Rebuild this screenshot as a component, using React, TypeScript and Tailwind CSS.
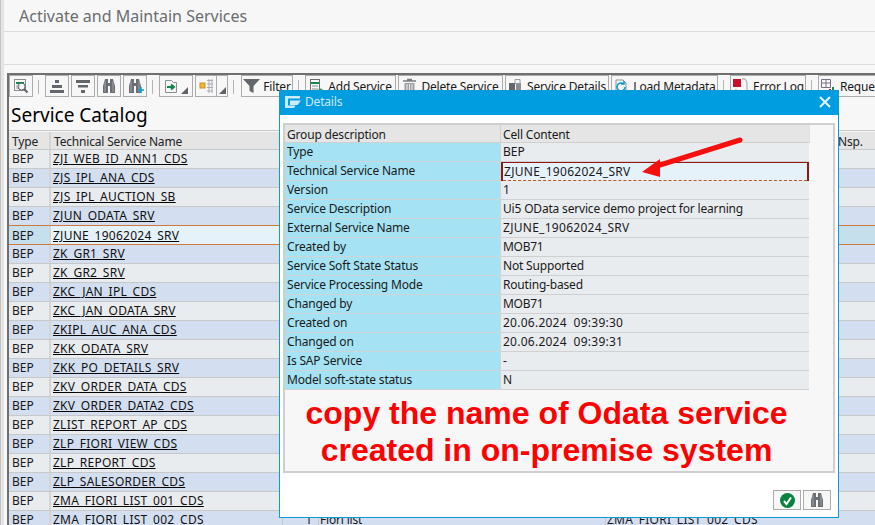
import React from "react";

const names = [
  "ZJI_WEB_ID_ANN1_CDS","ZJS_IPL_ANA_CDS","ZJS_IPL_AUCTION_SB","ZJUN_ODATA_SRV","ZJUNE_19062024_SRV",
  "ZK_GR1_SRV","ZK_GR2_SRV","ZKC_JAN_IPL_CDS","ZKC_JAN_ODATA_SRV","ZKIPL_AUC_ANA_CDS","ZKK_ODATA_SRV",
  "ZKK_PO_DETAILS_SRV","ZKV_ORDER_DATA_CDS","ZKV_ORDER_DATA2_CDS","ZLIST_REPORT_AP_CDS","ZLP_FIORI_VIEW_CDS",
  "ZLP_REPORT_CDS","ZLP_SALESORDER_CDS","ZMA_FIORI_LIST_001_CDS","ZMA_FIORI_LIST_002_CDS",
];

const details: [string, string, string][] = [
  ["Type","BEP","tracking-normal"],
  ["Technical Service Name","ZJUNE_19062024_SRV","tracking-[0.28px]"],
  ["Version","1","tracking-normal"],
  ["Service Description","Ui5 OData service demo project for learning","tracking-[-0.18px]"],
  ["External Service Name","ZJUNE_19062024_SRV","tracking-[0.28px]"],
  ["Created by","MOB71","tracking-[-0.3px]"],
  ["Service Soft State Status","Not Supported","tracking-[-0.18px]"],
  ["Service Processing Mode","Routing-based","tracking-[-0.18px]"],
  ["Changed by","MOB71","tracking-[-0.3px]"],
  ["Created on","20.06.2024  09:39:30","tracking-[0.25px]"],
  ["Changed on","20.06.2024  09:39:31","tracking-[0.25px]"],
  ["Is SAP Service","-","tracking-normal"],
  ["Model soft-state status","N","tracking-normal"],
];

function Binoculars({ plus }: { plus?: boolean }) {
  return (
    <svg width="18" height="16" viewBox="0 0 18 16">
      <path d="M5 1h3v4h2V1h3l2 7v7h-5V8H8v7H3V8z" fill="#6b6f75" />
      <path d="M5 3v11M13 3v11" stroke="#9fa3a8" strokeWidth="1" />
      {plus && <path d="M12 12h6M15 9v6" stroke="#0a9bd8" strokeWidth="1.6" />}
    </svg>
  );
}

function TBtn({ w, children, className = "" }: { w: string; children?: React.ReactNode; className?: string }) {
  return (
    <div className={`${w} h-[22px] shrink-0 border border-[#ababab] bg-[#f7f7f7] flex items-center justify-center gap-1 overflow-hidden whitespace-nowrap [&>span]:pt-[2px] ${className}`}>
      {children}
    </div>
  );
}

const Sep = () => <div className="w-px h-[14px] mt-[5px] bg-[#b5b5b5] ml-[5px] mr-[6px] shrink-0" />;
const Corner = () => (
  <svg width="7" height="7" viewBox="0 0 7 7" className="self-end mb-[2px]">
    <path d="M7 0v7H0z" fill="#5f6368" />
  </svg>
);

export default function App() {
  return (
    <div className="relative w-[875px] h-[525px] overflow-hidden bg-[#f7f7f7] text-[12px] leading-[18px] tracking-[-0.18px] text-[#1a1a1a] font-['Noto_Sans',sans-serif]">
      <div className="flex h-full">
        <div className="w-[4px] shrink-0 bg-[#e4e4e4] border-l border-[#c4c4c4]" />
        <div className="flex-1 flex flex-col min-w-0">
          <div className="h-[32px] shrink-0 border-b border-[#dcdcdc] pl-[15px] pt-[4px] text-[16px] leading-[24px] tracking-normal text-[#6a6d70]">
            Activate and Maintain Services
          </div>
          <div className="h-[33px] shrink-0 border-b border-[#dcdcdc]" />
          <div className="h-[8px] shrink-0" />
          <div className="flex-1 ml-[3px] border-l-2 border-t-2 border-[#6f6f6f] flex flex-col min-h-0">
            {/* toolbar */}
            <div className="h-[23px] shrink-0 flex items-start">
              <TBtn w="w-[24px]">
                <svg width="16" height="16" viewBox="0 0 16 16" fill="none">
                  <rect x="1.5" y="1.5" width="11" height="11" stroke="#8a8d91" />
                  <path d="M3 5h8" stroke="#0f8a4c" strokeWidth="2" />
                  <path d="M3 8h5M3 10h4" stroke="#9c9fa3" />
                  <circle cx="8.5" cy="8.5" r="3.5" stroke="#5f6368" fill="#ffffff66" />
                  <path d="M11 11l3.5 3.5" stroke="#5f6368" strokeWidth="2" />
                </svg>
              </TBtn>
              <Sep />
              <TBtn w="w-[24px]">
                <svg width="16" height="14" viewBox="0 0 16 14">
                  <path d="M6 1h4v3H6zM3 6h10v3H3zM1 11h14v3H1z" fill="#63666a" />
                </svg>
              </TBtn>
              <TBtn w="w-[24px]" className="ml-[2px]">
                <svg width="16" height="14" viewBox="0 0 16 14">
                  <path d="M1 1h14v3H1zM3 6h10v2.5H3zM6 11h4v3H6z" fill="#63666a" />
                </svg>
              </TBtn>
              <TBtn w="w-[24px]" className="ml-[2px]"><Binoculars /></TBtn>
              <TBtn w="w-[24px]" className="ml-[2px]"><Binoculars plus /></TBtn>
              <Sep />
              <TBtn w="w-[34px]" className="!gap-[2px]">
                <svg width="15" height="16" viewBox="0 0 15 16" fill="none">
                  <path d="M1.5 2.5h6l2 2h3v10h-11z" stroke="#8a8d91" fill="#f7f7f7" />
                  <path d="M3 9h6M7 6.5 10 9l-3 2.5" stroke="#0f8a4c" strokeWidth="2" />
                </svg>
                <Corner />
              </TBtn>
              <TBtn w="w-[21px]" className="ml-[2px] !border-r-0">
                <svg width="15" height="14" viewBox="0 0 15 14" fill="none">
                  <rect x="1" y="4" width="5" height="5" fill="#f1b544" stroke="#d58a12" />
                  <path d="M8 1.5h6M8 5h6M8 8.5h6M8 12h6M10 0v14M13 0v14" stroke="#a8abaf" />
                </svg>
              </TBtn>
              <TBtn w="w-[12px]"><Corner /></TBtn>
              <Sep />
              <TBtn w="w-[52px]" className="ml-px !gap-[3px]">
                <svg width="17" height="16" viewBox="0 0 17 16">
                  <path d="M0 1h17l-6.5 7v7l-4-2V8z" fill="#63666a" />
                </svg>
                <span>Filter</span>
              </TBtn>
              <Sep />
              <TBtn w="w-[91px]">
                <svg width="15" height="16" viewBox="0 0 15 16" fill="none">
                  <rect x="1.5" y="1.5" width="9" height="12" stroke="#6b6f75" />
                  <path d="M2 5h8" stroke="#0f8a4c" strokeWidth="2" />
                  <path d="M3 8h6M3 11h6" stroke="#8a8d91" />
                  <circle cx="11.5" cy="13" r="2.5" fill="#2f9e5f" />
                </svg>
                <span>Add Service</span>
              </TBtn>
              <TBtn w="w-[105px]" className="ml-[2px]">
                <svg width="15" height="16" viewBox="0 0 15 16" fill="none">
                  <path d="M1 3h13M5 1.5h5" stroke="#7a7d81" strokeWidth="1.5" />
                  <path d="M2.5 5h10v10h-10z" fill="#9a9da1" />
                  <path d="M5 6v8M7.5 6v8M10 6v8" stroke="#f0f0f0" />
                </svg>
                <span>Delete Service</span>
              </TBtn>
              <TBtn w="w-[104px]" className="ml-[2px]">
                <svg width="15" height="16" viewBox="0 0 15 16" fill="none">
                  <path d="M1 5h6v9H1z" fill="#63666a" />
                  <path d="M8 5h5v9H8z" fill="#8a8d91" />
                  <path d="M7 1.5h5v4H7z" stroke="#9a9da1" fill="#f7f7f7" />
                </svg>
                <span>Service Details</span>
              </TBtn>
              <TBtn w="w-[107px]" className="ml-[2px]">
                <svg width="16" height="16" viewBox="0 0 16 16" fill="none">
                  <path d="M3 13V2h7l3 3v9" stroke="#8a8d91" />
                  <path d="M12 9a4 4 0 1 1-1.3-3M11 3v3H8" stroke="#0a9bd8" strokeWidth="1.6" />
                </svg>
                <span>Load Metadata</span>
              </TBtn>
              <Sep />
              <TBtn w="w-[76px]">
                <svg width="17" height="16" viewBox="0 0 17 16" fill="none">
                  <rect x="1" y="1" width="8" height="8" fill="#c8102e" />
                  <path d="M10 1h3l2 3v11H4v-4" stroke="#9a9da1" />
                </svg>
                <span>Error Log</span>
              </TBtn>
              <Sep />
              <TBtn w="w-[70px]" className="!justify-start pl-px">
                <svg width="16" height="16" viewBox="0 0 16 16" fill="none" className="shrink-0">
                  <path d="M1.5 1.5h9v8h-9zM1.5 5h9M6 1.5v8" stroke="#7a6f86" />
                  <path d="M9 11h2v4H9z" fill="#c8102e" />
                  <path d="M12 9h2v6h-2z" fill="#0f8a4c" />
                </svg>
                <span>Request</span>
              </TBtn>
            </div>

            <div className="h-[33px] shrink-0 border-b border-[#c8c8c8] pl-[2px] text-[19px] leading-[34px] tracking-normal text-black">
              Service Catalog
            </div>
            <div className="h-[1px] shrink-0" />

            {/* table header */}
            <div className="h-[18px] shrink-0 flex bg-[#e5e5e5] border-b border-[#c8c8c8] text-[#222] leading-[20px]">
              <div className="w-[42px] shrink-0 pl-[3px] border-r-2 border-[#d4d4d4]">Type</div>
              <div className="w-[231px] shrink-0 pl-[3px]">Technical Service Name</div>
              <div className="w-[323px] shrink-0" />
              <div className="w-[230px] shrink-0" />
              <div className="pl-[3px]">Nsp.</div>
            </div>

            {/* table rows */}
            {names.map((n, i) => {
              const sel = i === 4;
              const bg = sel ? "bg-[#e6f2fa]" : i % 2 === 0 ? "bg-[#e9ecef]" : "bg-[#d3dff0]";
              const typeBg = sel ? "bg-[#c5e0ec]" : "bg-transparent";
              return (
                <div
                  key={n}
                  className={`h-[19px] shrink-0 flex border-b ${bg} ${sel ? "leading-[19px]" : ""} ${sel || i === 3 ? "border-[#cf7a3c]" : "border-[#c8c8c8]"}`}
                >
                  <div className={`w-[42px] shrink-0 pl-[3px] tracking-normal border-r-2 border-[#d4d4d4] ${typeBg}`}>BEP</div>
                  <div className="w-[231px] shrink-0 pl-[2px] tracking-[0.26px] underline decoration-black text-[#111] whitespace-nowrap">{n}</div>
                  {i === 19 && (
                    <>
                      <div className="w-[36px] shrink-0 border-l border-[#c8c8c8] text-right pr-[6px]">1</div>
                      <div className="w-[287px] shrink-0 border-l border-[#c8c8c8] pl-[1px]">Fiori list</div>
                      <div className="w-[229px] shrink-0 border-l border-[#c8c8c8] pl-[1px] tracking-[0.26px] whitespace-nowrap">ZMA_FIORI_LIST_002_CDS</div>
                    </>
                  )}
                  <div className={`flex-1 ${sel ? "bg-[#c5e0ec]" : ""}`} />
                </div>
              );
            })}
          </div>
        </div>
      </div>

      {/* dialog */}
      <div className="absolute left-[279px] top-[90px] w-[560px] h-[428px] bg-white border border-[#0f9ad6] flex flex-col">
        <div className="h-[24px] shrink-0 bg-[#009de0] flex items-center pl-[5px] pr-[7px] pb-[2px] gap-[4px] text-[#cdeaf8]">
          <svg width="16" height="12" viewBox="0 0 16 12">
            <path d="M0 0h15v2.5H3v7h7.5L9 12H0zM5 4.5h11L12.5 9H5z" fill="#cdeaf8" />
          </svg>
          <span className="flex-1">Details</span>
          <svg width="12" height="12" viewBox="0 0 12 12">
            <path d="M1 1l10 10M11 1L1 11" stroke="#e4f4fb" strokeWidth="2" />
          </svg>
        </div>
        <div className="mt-[8px] mx-[3px] h-[350px] shrink-0 border-2 border-[#cfcfcf] bg-[#f7f7f7] flex flex-col">
          <div className="h-[18px] shrink-0 flex leading-[20px]">
            <div className="w-[216px] shrink-0 bg-[#e5e5e5] border-r border-b border-[#d0d0d0] pl-[2px]">Group description</div>
            <div className="w-[308px] shrink-0 bg-[#e5e5e5] border-b border-[#d0d0d0] pl-[2px]">Cell Content</div>
            <div className="flex-1 border-l border-[#e2e2e2]" />
          </div>
          {details.map(([k, v, tr], i) => (
            <div key={k} className="h-[19px] shrink-0 flex">
              <div className="w-[216px] shrink-0 bg-[#a5e3f4] border-r border-b border-[#cfd4d6] pl-[2px] whitespace-nowrap">{k}</div>
              {i === 1 ? (
                <div className="w-[308px] shrink-0 border-x-2 border-t border-[#8e1a12]">
                  <div className={`h-full border-b border-dashed border-[#c0561f] bg-[#e6f2fa] pl-[1px] leading-[17px] whitespace-pre ${tr}`}>{v}</div>
                </div>
              ) : (
                <div className={`w-[308px] shrink-0 bg-[#e9ecef] border-b border-[#d0d0d0] pl-[2px] whitespace-pre ${tr}`}>{v}</div>
              )}
              <div className="flex-1" />
            </div>
          ))}
          <div className="flex-1 flex flex-col items-center pt-[5px] pr-[25px] font-['Liberation_Sans',sans-serif] font-bold text-[32px] leading-[37px] tracking-normal text-[#fe0000]">
            <span>copy the name of Odata service</span>
            <span>created in on-premise system</span>
          </div>
        </div>
        <div className="flex-1 flex justify-end items-start gap-[2px] pt-[17px] pr-[7px]">
          <div className="w-[28px] h-[20px] border border-[#ababab] bg-[#f7f7f7] flex items-center justify-center">
            <svg width="15" height="15" viewBox="0 0 15 15">
              <circle cx="7.5" cy="7.5" r="7.5" fill="#07823f" />
              <path d="M4 8l2.5 3L11 4.5" stroke="#fff" strokeWidth="2" fill="none" />
            </svg>
          </div>
          <div className="w-[28px] h-[20px] border border-[#ababab] bg-[#f7f7f7] flex items-center justify-center">
            <Binoculars />
          </div>
        </div>
      </div>

      {/* annotation arrow */}
      <svg className="absolute left-[635px] top-[132px]" width="115" height="48" viewBox="0 0 115 48">
        <path d="M105 8 L25 33" stroke="#f5100f" strokeWidth="5" strokeLinecap="round" fill="none" />
        <path d="M7 40 L25 27 L25 45 Z" fill="#f5100f" />
      </svg>
    </div>
  );
}
